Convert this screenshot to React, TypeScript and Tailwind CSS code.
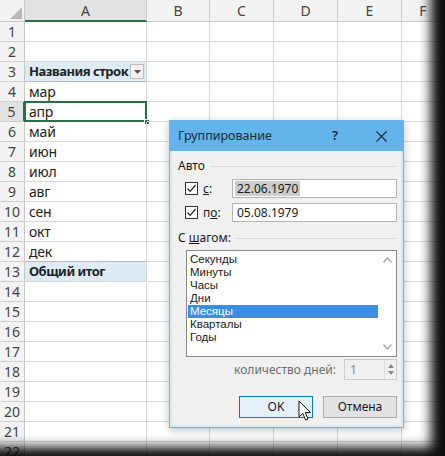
import React from "react";

const cols = [
  { l: "A", w: "w-[122px]" },
  { l: "B", w: "w-[63px]" },
  { l: "C", w: "w-[64px]" },
  { l: "D", w: "w-[64px]" },
  { l: "E", w: "w-[64px]" },
  { l: "F", w: "flex-1" },
];

const rows: { t: string; b?: boolean; hl?: boolean }[] = [
  { t: "" },
  { t: "" },
  { t: "Названия строк", b: true, hl: true },
  { t: "мар" },
  { t: "апр" },
  { t: "май" },
  { t: "июн" },
  { t: "июл" },
  { t: "авг" },
  { t: "сен" },
  { t: "окт" },
  { t: "дек" },
  { t: "Общий итог", b: true, hl: true },
  { t: "" },
  { t: "" },
  { t: "" },
  { t: "" },
  { t: "" },
  { t: "" },
  { t: "" },
  { t: "" },
  { t: "" },
];

const listItems = ["Секунды", "Минуты", "Часы", "Дни", "Месяцы", "Кварталы", "Годы"];

function Check() {
  return (
    <div className="w-[13px] h-[13px] border border-[#333] bg-white flex items-center justify-center">
      <svg width="11" height="11" viewBox="0 0 11 11">
        <path d="M1.5 5.5 L4.2 8.3 L9.5 2" fill="none" stroke="#222" strokeWidth="1.2" />
      </svg>
    </div>
  );
}

export default function App() {
  return (
    <div
      className="relative w-[445px] h-[456px] overflow-hidden bg-white text-[#222]"
      style={{ fontFamily: '"Noto Sans", "Open Sans", sans-serif' }}
    >
      {/* Spreadsheet */}
      <div className="flex flex-col">
        <div className="flex h-[22px]">
          <div className="w-[25px] h-full bg-[#f3f3f3] border-r border-b border-[#c8c8c8] relative">
            <svg className="absolute right-[2px] bottom-[2px]" width="12" height="12" viewBox="0 0 12 12">
              <path d="M12 0 L12 12 L0 12 Z" fill="#b9b9b9" />
            </svg>
          </div>
          {cols.map((c, i) => (
            <div
              key={c.l}
              className={`${c.w} h-full border-r border-[#cfcfcf] flex items-center justify-center text-[14px] ${
                i === 0
                  ? "bg-[#e2e2e2] text-[#444] border-b-2 border-b-[#217346]"
                  : "bg-[#f3f3f3] text-[#444] border-b border-b-[#c8c8c8]"
              }`}
            >
              {c.l}
            </div>
          ))}
        </div>
        {rows.map((r, ri) => (
          <div key={ri} className="flex h-[20px]">
            <div
              className={`w-[25px] h-full flex items-center justify-center text-[14px] text-[#444] border-b border-[#d0d0d0] ${
                ri === 4 ? "bg-[#e2e2e2] border-r-2 border-r-[#217346]" : "bg-[#f3f3f3] border-r border-r-[#c8c8c8]"
              }`}
            >
              {ri + 1}
            </div>
            {cols.map((c, ci) => {
              const isA = ci === 0;
              const hl = isA && r.hl;
              let cls = `${c.w} h-full border-r border-b border-[#d9d9d9] flex items-center relative`;
              if (hl) cls += " bg-[#ddebf7]";
              if (isA && ri === 2) cls += " border-b-[#9bc2e6]";
              if (isA && ri === 11) cls += " border-b-[#9bc2e6]";
              return (
                <div key={ci} className={cls}>
                  {isA && r.t && (
                    <span
                      className={`pl-[4px] leading-none ${
                        r.b ? "font-bold text-[13px] tracking-[-0.5px]" : "text-[14px] tracking-[-0.2px]"
                      }`}
                    >
                      {r.t}
                    </span>
                  )}
                  {isA && ri === 2 && (
                    <div className="absolute right-[2px] top-[2px] w-[14px] h-[15px] border border-[#bdbdbd] bg-[#f2f2f2] flex items-center justify-center">
                      <svg width="7" height="4" viewBox="0 0 7 4">
                        <path d="M0 0 L7 0 L3.5 4 Z" fill="#555" />
                      </svg>
                    </div>
                  )}
                  {isA && ri === 4 && (
                    <>
                      <div className="absolute -left-[1px] -top-[1px] -right-[1px] -bottom-[1px] border-2 border-[#217346]" />
                      <div className="absolute -right-[4px] -bottom-[4px] w-[6px] h-[6px] bg-[#217346] border border-white" />
                    </>
                  )}
                </div>
              );
            })}
          </div>
        ))}
      </div>

      {/* Dialog */}
      <div className="absolute left-[169px] top-[120px] w-[235px] h-[308px] border border-[#6eb5e6] bg-[#f0f0f0] flex flex-col shadow-[0_2px_8px_rgba(0,0,0,0.25)] text-[12px] text-[#1a1a1a]">
        <div className="h-[30px] bg-[#62b4ea] flex items-center pl-[8px] pr-[16px]">
          <span className="flex-1 text-[12.5px] text-[#1a2a3a]">Группирование</span>
          <span className="mr-[38px] text-[13px] text-[#1a2a3a] font-semibold">?</span>
          <svg width="11" height="11" viewBox="0 0 11 11">
            <path d="M0.5 0.5 L10.5 10.5 M10.5 0.5 L0.5 10.5" stroke="#1a2a3a" strokeWidth="1.1" />
          </svg>
        </div>
        <div className="flex-1 flex flex-col border-x-2 border-b-2 border-[#d8e9f6] pl-[6px] pr-[4px]">
          <div className="flex items-center mt-[6px] h-[18px]">
            <span>Авто</span>
            <div className="flex-1 h-px bg-[#dcdcdc] ml-[5px]" />
          </div>
          <div className="flex items-center mt-[4px] h-[19px] pl-[7px]">
            <Check />
            <span className="ml-[5px] w-[29px]">
              <span className="underline">с</span>:
            </span>
            <div className="flex-1 h-full bg-white border border-[#b5b5b5] flex items-center pl-[2px]">
              <span className="bg-[#cdcdcd] px-[2px] leading-[15px]">22.06.1970</span>
            </div>
          </div>
          <div className="flex items-center mt-[5px] h-[19px] pl-[7px]">
            <Check />
            <span className="ml-[5px] w-[29px]">
              п<span className="underline">о</span>:
            </span>
            <div className="flex-1 h-full bg-white border border-[#b5b5b5] flex items-center pl-[4px]">
              <span>05.08.1979</span>
            </div>
          </div>
          <div className="flex items-center mt-[7px] h-[18px]">
            <span>
              С <span className="underline">ш</span>агом:
            </span>
            <div className="flex-1 h-px bg-[#dcdcdc] ml-[5px]" />
          </div>
          <div className="ml-[8px] mt-[3px] h-[107px] bg-white border border-[#8a8a8a] flex">
            <div
              className="flex-1 flex flex-col pt-[2px] pl-[1px]"
              style={{ fontFamily: '"Liberation Sans", Arial, sans-serif' }}
            >
              {listItems.map((it) => (
                <div
                  key={it}
                  className={`h-[13px] leading-[13px] text-[11.5px] pl-[2px] ${
                    it === "Месяцы" ? "bg-[#3a8ee6] text-white" : ""
                  }`}
                >
                  {it}
                </div>
              ))}
            </div>
            <div className="w-[18px] flex flex-col items-center justify-between py-[6px]">
              <svg width="9" height="6" viewBox="0 0 9 6">
                <path d="M0.5 5.5 L4.5 1 L8.5 5.5" fill="none" stroke="#a8a8a8" strokeWidth="1.4" />
              </svg>
              <svg width="9" height="6" viewBox="0 0 9 6">
                <path d="M0.5 0.5 L4.5 5 L8.5 0.5" fill="none" stroke="#a8a8a8" strokeWidth="1.4" />
              </svg>
            </div>
          </div>
          <div className="flex items-center justify-end mt-[2px] h-[21px]">
            <span className="text-[#6d6d6d] mr-[8px]">количество дней:</span>
            <div className="w-[53px] h-full border border-[#cccccc] flex items-center">
              <span className="flex-1 pl-[5px] text-[#8a8a8a]">1</span>
              <div className="w-[12px] h-full flex flex-col items-center justify-center gap-[3px] border-l border-[#dddddd]">
                <svg width="6" height="4" viewBox="0 0 6 4">
                  <path d="M0 4 L3 0 L6 4 Z" fill="#8a8a8a" />
                </svg>
                <svg width="6" height="4" viewBox="0 0 6 4">
                  <path d="M0 0 L3 4 L6 0 Z" fill="#8a8a8a" />
                </svg>
              </div>
            </div>
          </div>
          <div className="flex justify-end gap-[10px] mt-[16px]">
            <div className="w-[74px] h-[22px] bg-[#e5f1fb] border border-[#0078d7] flex items-center justify-center">
              OK
            </div>
            <div className="w-[74px] h-[22px] bg-[#e1e1e1] border border-[#adadad] flex items-center justify-center">
              Отмена
            </div>
          </div>
        </div>
      </div>

      {/* Mouse cursor */}
      <svg className="absolute left-[298px] top-[400px]" width="14" height="22" viewBox="0 0 14 22">
        <path
          d="M1 1 L1 17 L4.8 13.4 L7.6 20 L10 19 L7.3 12.6 L12.5 12.6 Z"
          fill="white"
          stroke="#111"
          strokeWidth="1"
          strokeLinejoin="round"
        />
      </svg>

      {/* Screenshot edge shadow */}
      <div className="absolute inset-0 pointer-events-none shadow-[inset_-18px_-13px_12px_-4px_rgba(0,0,0,0.95)]" />
    </div>
  );
}
